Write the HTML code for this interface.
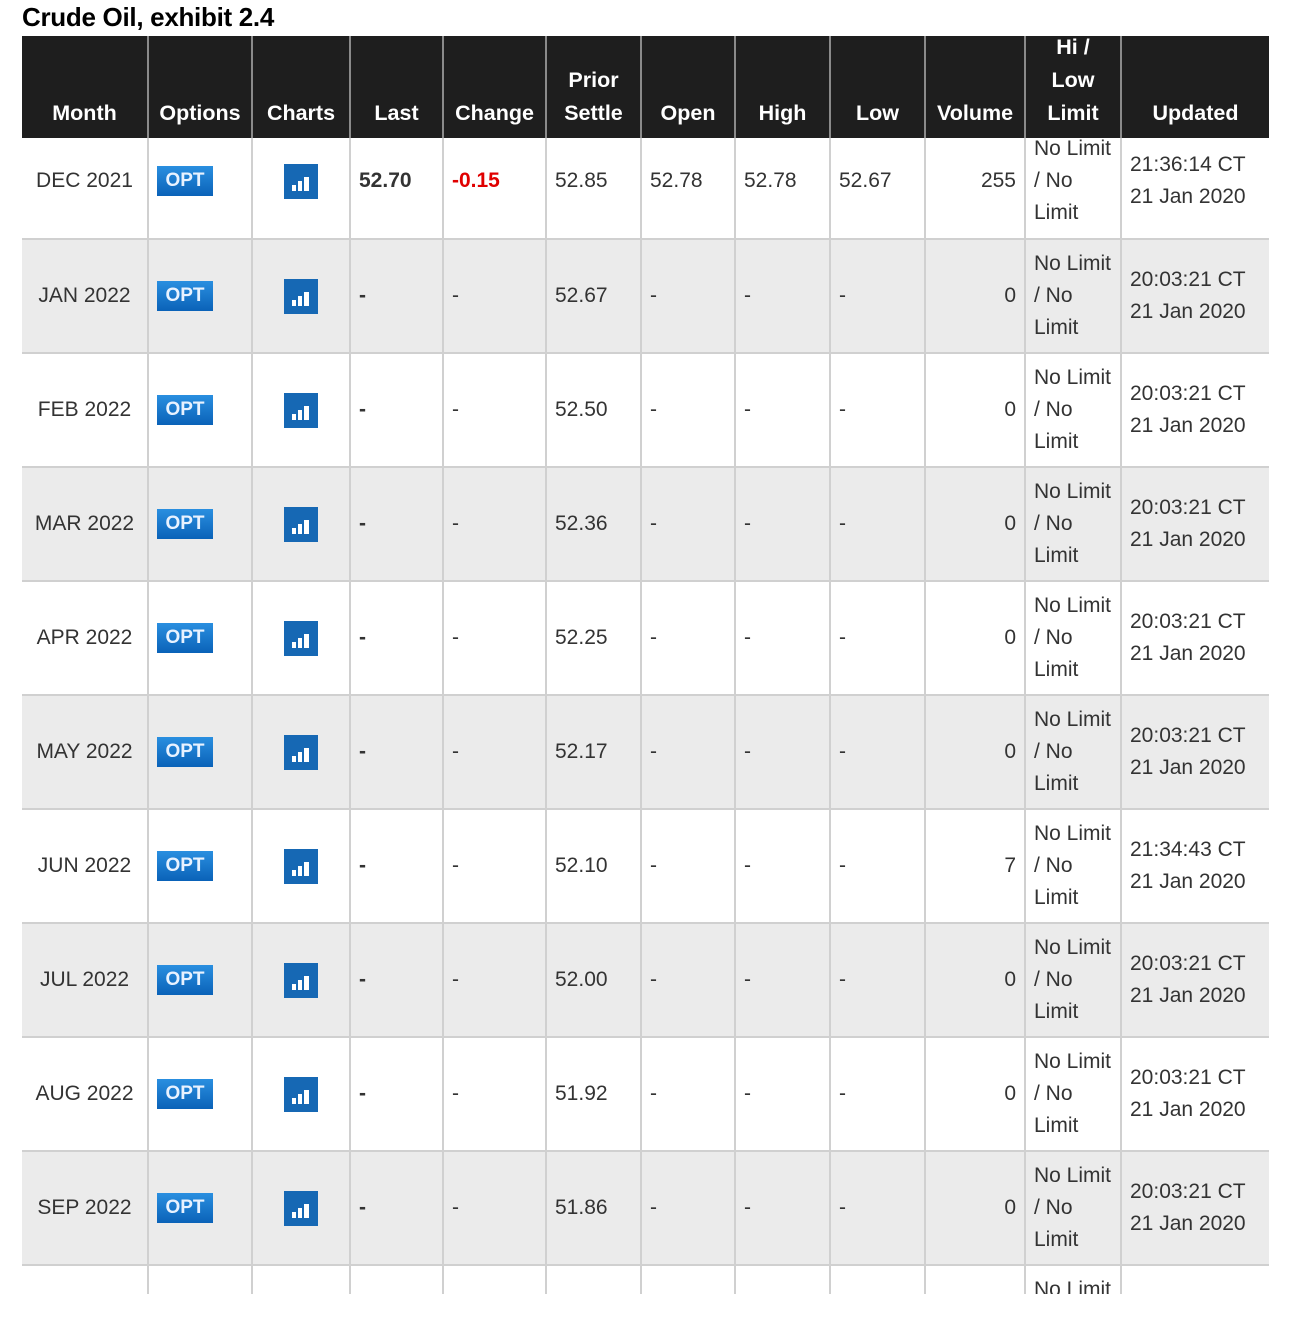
<!DOCTYPE html>
<html><head><meta charset="utf-8"><style>
html,body{margin:0;padding:0;background:#fff;width:1316px;height:1334px;overflow:hidden}
h1{position:absolute;left:22px;top:0;margin:0;font:bold 26px/34px "Liberation Sans",sans-serif;color:#000;letter-spacing:-0.3px}
.wrap{position:absolute;left:22px;top:36px;width:1247px;height:1258px;overflow:hidden}
table{border-collapse:collapse;table-layout:fixed;width:1247px;font:21px/32px "Liberation Sans",sans-serif;color:#333}
th{background:#1e1e1e;color:#fff;font-weight:bold;font-size:21.5px;height:94px;vertical-align:bottom;padding:0 0 8px;line-height:33px;border-left:2px solid #8a8a8a;text-align:center;white-space:nowrap}
th div{height:94px;display:flex;flex-direction:column;justify-content:flex-end}
th:first-child{border-left:none}
td{border-left:2px solid #d0d0d0;border-top:2px solid #d0d0d0;padding:0 8px;height:112px;vertical-align:middle;white-space:nowrap}
td:first-child{border-left:none;text-align:center;padding:0}
tr.r1 td{height:86px;border-top:none;padding-top:0;padding-bottom:14px;vertical-align:middle}
tr.r1 td .f{height:86px;display:flex;flex-direction:column;justify-content:center;white-space:normal}
tr.g td{background:#ebebeb}
.opt{display:inline-block;width:56px;height:30px;background:linear-gradient(#2a8fe0,#0a62b8);color:#e8f2ff;font:bold 19px/30px "Liberation Sans",sans-serif;text-align:center;vertical-align:middle}
.ch{display:block;margin:0 auto;width:34px;height:35px}
td.c{text-align:center;padding:0}
td.r{text-align:right}
td.lim{white-space:normal;line-height:32px;padding-right:2px}
</style></head><body>
<h1>Crude Oil, exhibit 2.4</h1>
<div class="wrap"><table>
<colgroup><col style="width:126px"><col style="width:104px"><col style="width:98px"><col style="width:93px"><col style="width:103px"><col style="width:95px"><col style="width:94px"><col style="width:95px"><col style="width:95px"><col style="width:100px"><col style="width:96px"><col style="width:148px"></colgroup>
<tr><th>Month</th><th>Options</th><th>Charts</th><th>Last</th><th>Change</th><th><div><span>Prior</span><span>Settle</span></div></th><th>Open</th><th>High</th><th>Low</th><th>Volume</th><th><div><span>Hi /</span><span>Low</span><span>Limit</span></div></th><th>Updated</th></tr>
<tr class="r1"><td>DEC 2021</td><td><span class="opt">OPT</span></td><td class="c"><svg class="ch" viewBox="0 0 34 35"><rect width="34" height="35" fill="#1668b4"/><rect x="8" y="21" width="4" height="6" fill="#fff"/><rect x="14" y="17" width="4" height="10" fill="#fff"/><rect x="20" y="13" width="5" height="14" fill="#fff"/></svg></td><td><b>52.70</b></td><td style="color:#e00000"><b>-0.15</b></td><td>52.85</td><td>52.78</td><td>52.78</td><td>52.67</td><td class="r">255</td><td class="lim"><div class="f"><span>No Limit</span><span>/ No</span><span>Limit</span></div></td><td>21:36:14 CT<br>21 Jan 2020</td></tr>
<tr class="g"><td>JAN 2022</td><td><span class="opt">OPT</span></td><td class="c"><svg class="ch" viewBox="0 0 34 35"><rect width="34" height="35" fill="#1668b4"/><rect x="8" y="21" width="4" height="6" fill="#fff"/><rect x="14" y="17" width="4" height="10" fill="#fff"/><rect x="20" y="13" width="5" height="14" fill="#fff"/></svg></td><td><b>-</b></td><td>-</td><td>52.67</td><td>-</td><td>-</td><td>-</td><td class="r">0</td><td class="lim">No Limit / No Limit</td><td>20:03:21 CT<br>21 Jan 2020</td></tr>
<tr><td>FEB 2022</td><td><span class="opt">OPT</span></td><td class="c"><svg class="ch" viewBox="0 0 34 35"><rect width="34" height="35" fill="#1668b4"/><rect x="8" y="21" width="4" height="6" fill="#fff"/><rect x="14" y="17" width="4" height="10" fill="#fff"/><rect x="20" y="13" width="5" height="14" fill="#fff"/></svg></td><td><b>-</b></td><td>-</td><td>52.50</td><td>-</td><td>-</td><td>-</td><td class="r">0</td><td class="lim">No Limit / No Limit</td><td>20:03:21 CT<br>21 Jan 2020</td></tr>
<tr class="g"><td>MAR 2022</td><td><span class="opt">OPT</span></td><td class="c"><svg class="ch" viewBox="0 0 34 35"><rect width="34" height="35" fill="#1668b4"/><rect x="8" y="21" width="4" height="6" fill="#fff"/><rect x="14" y="17" width="4" height="10" fill="#fff"/><rect x="20" y="13" width="5" height="14" fill="#fff"/></svg></td><td><b>-</b></td><td>-</td><td>52.36</td><td>-</td><td>-</td><td>-</td><td class="r">0</td><td class="lim">No Limit / No Limit</td><td>20:03:21 CT<br>21 Jan 2020</td></tr>
<tr><td>APR 2022</td><td><span class="opt">OPT</span></td><td class="c"><svg class="ch" viewBox="0 0 34 35"><rect width="34" height="35" fill="#1668b4"/><rect x="8" y="21" width="4" height="6" fill="#fff"/><rect x="14" y="17" width="4" height="10" fill="#fff"/><rect x="20" y="13" width="5" height="14" fill="#fff"/></svg></td><td><b>-</b></td><td>-</td><td>52.25</td><td>-</td><td>-</td><td>-</td><td class="r">0</td><td class="lim">No Limit / No Limit</td><td>20:03:21 CT<br>21 Jan 2020</td></tr>
<tr class="g"><td>MAY 2022</td><td><span class="opt">OPT</span></td><td class="c"><svg class="ch" viewBox="0 0 34 35"><rect width="34" height="35" fill="#1668b4"/><rect x="8" y="21" width="4" height="6" fill="#fff"/><rect x="14" y="17" width="4" height="10" fill="#fff"/><rect x="20" y="13" width="5" height="14" fill="#fff"/></svg></td><td><b>-</b></td><td>-</td><td>52.17</td><td>-</td><td>-</td><td>-</td><td class="r">0</td><td class="lim">No Limit / No Limit</td><td>20:03:21 CT<br>21 Jan 2020</td></tr>
<tr><td>JUN 2022</td><td><span class="opt">OPT</span></td><td class="c"><svg class="ch" viewBox="0 0 34 35"><rect width="34" height="35" fill="#1668b4"/><rect x="8" y="21" width="4" height="6" fill="#fff"/><rect x="14" y="17" width="4" height="10" fill="#fff"/><rect x="20" y="13" width="5" height="14" fill="#fff"/></svg></td><td><b>-</b></td><td>-</td><td>52.10</td><td>-</td><td>-</td><td>-</td><td class="r">7</td><td class="lim">No Limit / No Limit</td><td>21:34:43 CT<br>21 Jan 2020</td></tr>
<tr class="g"><td>JUL 2022</td><td><span class="opt">OPT</span></td><td class="c"><svg class="ch" viewBox="0 0 34 35"><rect width="34" height="35" fill="#1668b4"/><rect x="8" y="21" width="4" height="6" fill="#fff"/><rect x="14" y="17" width="4" height="10" fill="#fff"/><rect x="20" y="13" width="5" height="14" fill="#fff"/></svg></td><td><b>-</b></td><td>-</td><td>52.00</td><td>-</td><td>-</td><td>-</td><td class="r">0</td><td class="lim">No Limit / No Limit</td><td>20:03:21 CT<br>21 Jan 2020</td></tr>
<tr><td>AUG 2022</td><td><span class="opt">OPT</span></td><td class="c"><svg class="ch" viewBox="0 0 34 35"><rect width="34" height="35" fill="#1668b4"/><rect x="8" y="21" width="4" height="6" fill="#fff"/><rect x="14" y="17" width="4" height="10" fill="#fff"/><rect x="20" y="13" width="5" height="14" fill="#fff"/></svg></td><td><b>-</b></td><td>-</td><td>51.92</td><td>-</td><td>-</td><td>-</td><td class="r">0</td><td class="lim">No Limit / No Limit</td><td>20:03:21 CT<br>21 Jan 2020</td></tr>
<tr class="g"><td>SEP 2022</td><td><span class="opt">OPT</span></td><td class="c"><svg class="ch" viewBox="0 0 34 35"><rect width="34" height="35" fill="#1668b4"/><rect x="8" y="21" width="4" height="6" fill="#fff"/><rect x="14" y="17" width="4" height="10" fill="#fff"/><rect x="20" y="13" width="5" height="14" fill="#fff"/></svg></td><td><b>-</b></td><td>-</td><td>51.86</td><td>-</td><td>-</td><td>-</td><td class="r">0</td><td class="lim">No Limit / No Limit</td><td>20:03:21 CT<br>21 Jan 2020</td></tr>
<tr><td>OCT 2022</td><td><span class="opt">OPT</span></td><td class="c"><svg class="ch" viewBox="0 0 34 35"><rect width="34" height="35" fill="#1668b4"/><rect x="8" y="21" width="4" height="6" fill="#fff"/><rect x="14" y="17" width="4" height="10" fill="#fff"/><rect x="20" y="13" width="5" height="14" fill="#fff"/></svg></td><td><b>-</b></td><td>-</td><td>51.80</td><td>-</td><td>-</td><td>-</td><td class="r">0</td><td class="lim">No Limit / No Limit</td><td>20:03:21 CT<br>21 Jan 2020</td></tr>
</table></div>
</body></html>
